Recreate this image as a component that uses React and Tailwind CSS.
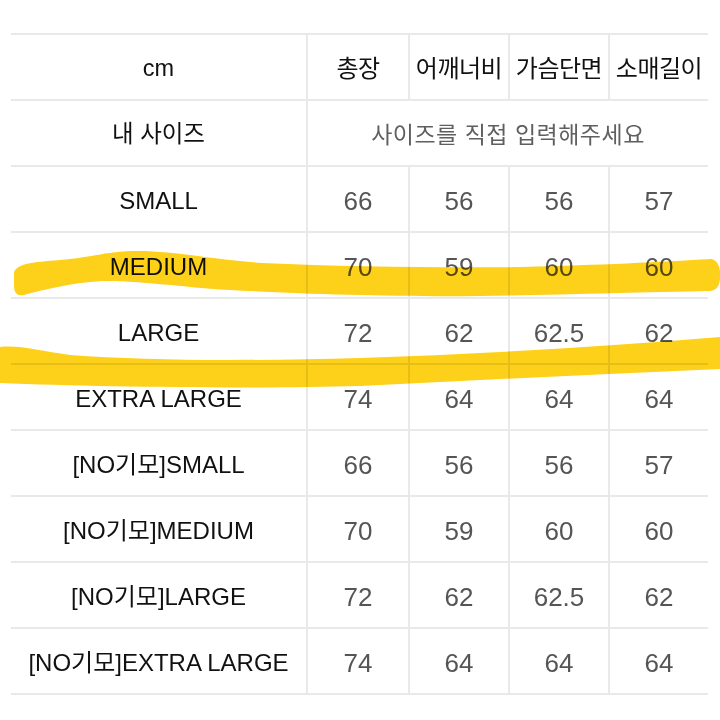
// Size chart with highlighter marks
const COLS = 'grid-cols-[295px_102px_100px_100px_100px]';

const headers = ['총장', '어깨너비', '가슴단면', '소매길이'];

const rows = [
  ['SMALL', '66', '56', '56', '57'],
  ['MEDIUM', '70', '59', '60', '60'],
  ['LARGE', '72', '62', '62.5', '62'],
  ['EXTRA LARGE', '74', '64', '64', '64'],
  ['[NO기모]SMALL', '66', '56', '56', '57'],
  ['[NO기모]MEDIUM', '70', '59', '60', '60'],
  ['[NO기모]LARGE', '72', '62', '62.5', '62'],
  ['[NO기모]EXTRA LARGE', '74', '64', '64', '64'],
];

const Cell = ({ children, first, className = '' }) => (
  <div className={`h-[66px] pt-1 flex items-center justify-center border-b-2 border-[#e9e9e9] ${first ? '' : 'border-l-2'} ${className}`}>
    {children}
  </div>
);

const Highlighter = () => (
  <svg className="absolute inset-0 pointer-events-none mix-blend-multiply" width="720" height="720" viewBox="0 0 720 720">
    <path
      fill="#fdd01a"
      d="M 14 274 C 14 264, 32 262, 60 260 C 88 258, 104 252, 132 251 C 172 250, 205 259, 262 263 C 350 267, 450 268, 522 267 C 600 265, 660 262, 712 259 Q 721 262, 720 277 Q 720 290, 710 291 C 640 292, 560 295, 480 296 C 400 297, 300 294, 230 290 C 172 286, 132 280, 102 281 C 70 283, 42 290, 24 295 Q 14 297, 14 286 Z"
    />
    <path
      fill="#fdd01a"
      d="M 0 347 C 20 345, 40 351, 70 355 C 150 361, 250 361, 360 358 C 480 354, 600 347, 720 337 L 720 369 C 600 374, 480 380, 360 386 C 250 389, 100 387, 0 383 Z"
    />
  </svg>
);

export default function App() {
  return (
    <div className="relative w-[720px] h-[720px] bg-white overflow-hidden font-['Liberation_Sans','Noto_Sans_CJK_KR',sans-serif]">
      <div className={`ml-[11px] mt-[33px] w-[697px] grid ${COLS} border-t-2 border-[#e9e9e9]`}>
        <Cell first className="text-[23.5px] text-[#111]">cm</Cell>
        {headers.map((h) => (
          <Cell key={h} className="text-[24px] text-[#111] tracking-[-0.5px]">{h}</Cell>
        ))}

        <Cell first className="text-[23.5px] text-[#111]">내 사이즈</Cell>
        <Cell className="col-span-4 text-[23px] text-[#5f5f5f] tracking-[0.5px]">사이즈를 직접 입력해주세요</Cell>

        {rows.map((r) => (
          <div key={r[0]} className="contents">
            <Cell first className="text-[24px] text-[#111]">{r[0]}</Cell>
            {r.slice(1).map((v, i) => (
              <Cell key={i} className="text-[26px] text-[#555]">{v}</Cell>
            ))}
          </div>
        ))}
      </div>
      <Highlighter />
    </div>
  );
}
